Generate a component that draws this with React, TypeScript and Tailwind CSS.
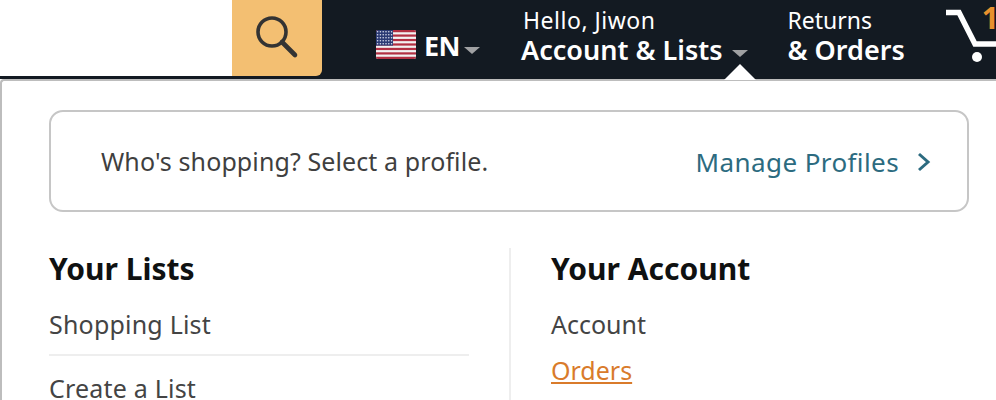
import React from "react";

const font = "font-['Noto_Sans','Open_Sans',sans-serif]";

const Flag = () => (
  <svg width="40" height="29" viewBox="0 0 40 29" className="block rounded-[2px]">
    <rect width="40" height="29" fill="#f2f2f2" />
    {[0, 1, 2, 3, 4, 5, 6].map((i) => (
      <rect key={i} y={i * 4.46} width="40" height="2.23" fill="#b22f42" />
    ))}
    <rect width="17" height="15.6" fill="#2b3a74" />
    {[0, 1, 2, 3, 4].map((r) =>
      [0, 1, 2, 3, 4, 5].map((c) => (
        <circle key={`${r}-${c}`} cx={1.6 + c * 2.8} cy={1.8 + r * 3} r="0.8" fill="#d8dcec" />
      ))
    )}
  </svg>
);

const Caret = () => (
  <span className="inline-block w-0 h-0 border-x-[8px] border-x-transparent border-t-[7px] border-t-[#a0a1a3]" />
);

const App = () => {
  return (
    <div className={`w-[996px] h-[400px] overflow-hidden bg-white relative ${font}`}>
      <div className="h-[79px] bg-[#131a22] flex items-start text-white">
        <div className="w-[232px] h-[76px] bg-white shrink-0" />
        <div className="w-[90px] h-[76px] bg-[#f3bf72] rounded-br-md flex items-center justify-center shrink-0">
          <svg width="46" height="46" viewBox="0 0 46 46" fill="none" stroke="#333" strokeLinecap="round">
            <circle cx="18" cy="17" r="14" strokeWidth="3.6" />
            <path d="M28 27 L41 40" strokeWidth="4.6" />
          </svg>
        </div>
        <div className="ml-[54px] mt-[30px] shrink-0">
          <Flag />
        </div>
        <div className="ml-[8px] mt-[26px] text-[27px] leading-[40px] font-bold flex items-center gap-[4px] tracking-[-0.5px] shrink-0">
          EN
          <span className="mt-[8px] flex"><Caret /></span>
        </div>
        <div className="ml-[41px] mt-[5px] shrink-0">
          <div className="pl-[2px] text-[23px] leading-[30px] tracking-[0.5px]">Hello, Jiwon</div>
          <div className="text-[27px] leading-[30px] font-semibold flex items-center gap-[10px] whitespace-nowrap">
            Account &amp; Lists
            <span className="mt-[6px] flex"><Caret /></span>
          </div>
        </div>
        <div className="ml-[39px] mt-[5px] shrink-0">
          <div className="text-[23px] leading-[30px]">Returns</div>
          <div className="text-[27px] leading-[30px] font-semibold whitespace-nowrap">&amp; Orders</div>
        </div>
        <div className="ml-[41px] shrink-0 relative w-[60px] h-[76px]">
          <svg width="60" height="76" viewBox="0 0 60 76" fill="none" className="absolute left-0 top-0">
            <path d="M0 12.5 H13 L29 44 H60" stroke="#fff" strokeWidth="5.5" strokeLinejoin="miter" />
            <circle cx="31" cy="57" r="5" fill="#fff" />
          </svg>
          <span className="absolute left-[36px] top-[-2px] text-[30px] leading-[40px] font-bold text-[#e8912d]">1</span>
        </div>
      </div>

      {/* caret pointing at the open account menu */}
      <div className="absolute left-[724px] top-[64px] w-0 h-0 border-x-[16px] border-x-transparent border-b-[16px] border-b-white" />

      <div className="h-[321px] bg-white border-l-2 border-t-2 border-[#bdbdbd] rounded-tl-[4px] pl-[47px] pt-[29px]">
        <div className="w-[920px] h-[102px] border-2 border-[#c6c6c6] rounded-[14px] flex items-center justify-between pl-[50px] pr-[36px]">
          <span className="text-[25px] text-[#3f3f3f] tracking-[0.1px] mt-[2px]">Who's shopping? Select a profile.</span>
          <span className="flex items-center gap-[18px] text-[26px] text-[#2c6b80] tracking-[0.4px] mt-[2px]">
            Manage Profiles
            <svg width="14" height="22" viewBox="0 0 14 22" fill="none" stroke="#2c6b80" strokeWidth="3">
              <path d="M2 3 L11 11 L2 19" />
            </svg>
          </span>
        </div>

        <div className="flex mt-[36px]">
          <div className="w-[420px]">
            <div className="text-[30px] leading-[42px] font-bold text-[#0f1111]">Your Lists</div>
            <div className="mt-[18px] text-[25px] leading-[32px] text-[#444] tracking-[0.2px]">Shopping List</div>
            <div className="mt-[14px] h-[2px] bg-[#eeeeee]" />
            <div className="mt-[16px] text-[25px] leading-[32px] text-[#444] tracking-[0.2px]">Create a List</div>
          </div>
          <div className="ml-[40px] w-[41px] border-l-2 border-[#eeeeee] h-[160px] shrink-0" />
          <div className="ml-[1px]">
            <div className="text-[30px] leading-[42px] font-bold text-[#0f1111]">Your Account</div>
            <div className="mt-[18px] text-[25px] leading-[32px] text-[#444]">Account</div>
            <div className="mt-[14px] text-[25px] leading-[32px] text-[#d97b2b] underline">Orders</div>
          </div>
        </div>
      </div>
    </div>
  );
};

export default App;
